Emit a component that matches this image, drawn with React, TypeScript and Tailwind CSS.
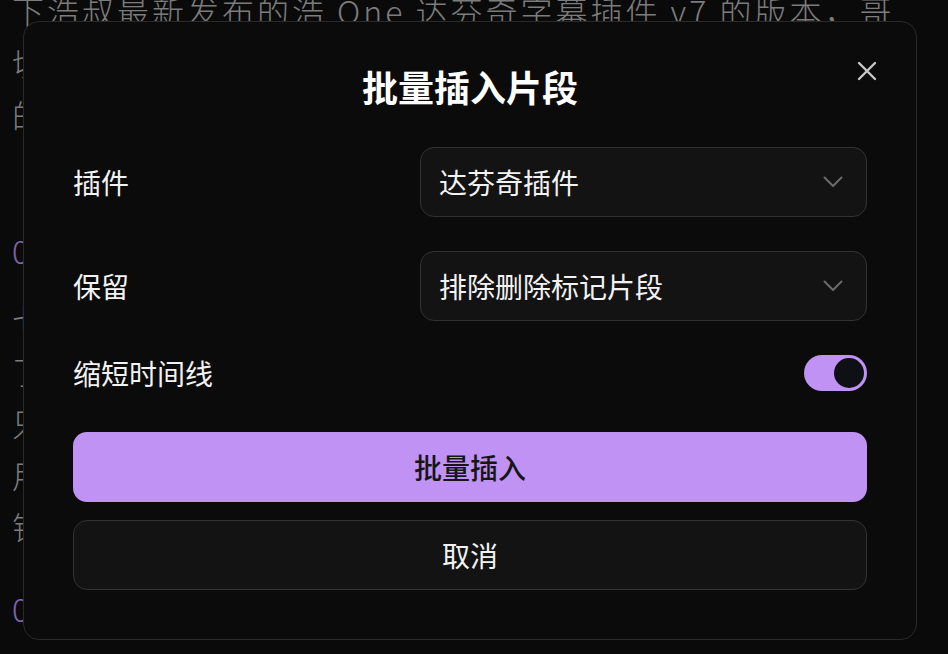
import React from "react";

const cjk = { fontFamily: '"Noto Sans CJK SC", "Noto Sans", sans-serif' };

function Chevron() {
  return (
    <svg width="20" height="12" viewBox="0 0 20 12" fill="none">
      <polyline points="1.5,1.5 10,10 18.5,1.5" stroke="#6a6a6a" strokeWidth="2" strokeLinecap="round" strokeLinejoin="round" />
    </svg>
  );
}

function SelectBox({ value }: { value: string }) {
  return (
    <div className="flex h-[70px] w-[447px] items-center justify-between rounded-[14px] border border-[#333333] bg-[#131313] pl-[18px] pr-[23px]">
      <span className="text-[28px] leading-none text-[#f2f2f2]">{value}</span>
      <Chevron />
    </div>
  );
}

function Toggle() {
  return (
    <div className="flex h-[36px] w-[63px] items-center justify-end rounded-full bg-[#bf92f4] p-[3px]">
      <div className="h-[30px] w-[30px] rounded-full bg-[#0e1016]" />
    </div>
  );
}

export default function App() {
  return (
    <div className="relative h-[654px] w-[948px] overflow-hidden bg-[#0a0a0a]" style={cjk}>
      {/* page content behind the dialog */}
      <div className="-mt-[16px] pl-[12px] text-[32px] font-light leading-[52px] tracking-[3px] text-[#7c7c7c] whitespace-nowrap">
        <p>下浩叔最新发布的浩 One 达芬奇字幕插件 v7 的版本，哥</p>
        <p>切换到新版本之后，字幕的样式和位置都可以单独调整，</p>
        <p>的确省了不少时间。</p>
        <p className="mt-[84px] text-[#7f62aa]">00:01:12 插件安装</p>
        <p className="mt-[16px]">七个步骤就能完成，不需要额外的配置文件和脚本，</p>
        <p>了解完基本操作以后，再去看批量处理的部分会更轻松，</p>
        <p>只要选好插件和保留规则，点一下就能全部插入时间线至</p>
        <p>用起来非常顺手，尤其是长视频的剪辑工作，</p>
        <p>错误率也明显降低了。</p>
        <p className="mt-[30px] text-[#7f62aa]">00:03:45 批量插入</p>
      </div>

      {/* dialog */}
      <div className="fixed inset-0 flex justify-start pl-[23px] pt-[21px]">
        <div className="relative flex h-[619px] w-[894px] flex-col rounded-[16px] border border-[#2a2a2a] bg-[#0b0b0b] px-[49px] pt-[37px]">
          <button className="absolute right-[38px] top-[38px] flex h-[22px] w-[22px] items-center justify-center">
            <svg width="20" height="20" viewBox="0 0 20 20" fill="none">
              <path d="M2 2 L18 18 M18 2 L2 18" stroke="#c8c8c8" strokeWidth="2.4" strokeLinecap="round" />
            </svg>
          </button>

          <h2 className="h-[54px] text-center text-[36px] font-semibold leading-[54px] text-white">批量插入片段</h2>

          <div className="mt-[34px] flex flex-col gap-[34px]">
            <div className="flex items-center justify-between">
              <span className="text-[28px] leading-none text-[#f2f2f2]">插件</span>
              <SelectBox value="达芬奇插件" />
            </div>
            <div className="flex items-center justify-between">
              <span className="text-[28px] leading-none text-[#f2f2f2]">保留</span>
              <SelectBox value="排除删除标记片段" />
            </div>
            <div className="flex items-center justify-between">
              <span className="text-[28px] leading-none text-[#f2f2f2]">缩短时间线</span>
              <Toggle />
            </div>
          </div>

          <button className="mt-[41px] h-[70px] w-full rounded-[14px] bg-[#bf92f4] text-[28px] font-medium text-[#161616]">
            批量插入
          </button>
          <button className="mt-[18px] h-[70px] w-full rounded-[14px] border border-[#333333] bg-[#131313] text-[28px] text-[#f2f2f2]">
            取消
          </button>
        </div>
      </div>
    </div>
  );
}
